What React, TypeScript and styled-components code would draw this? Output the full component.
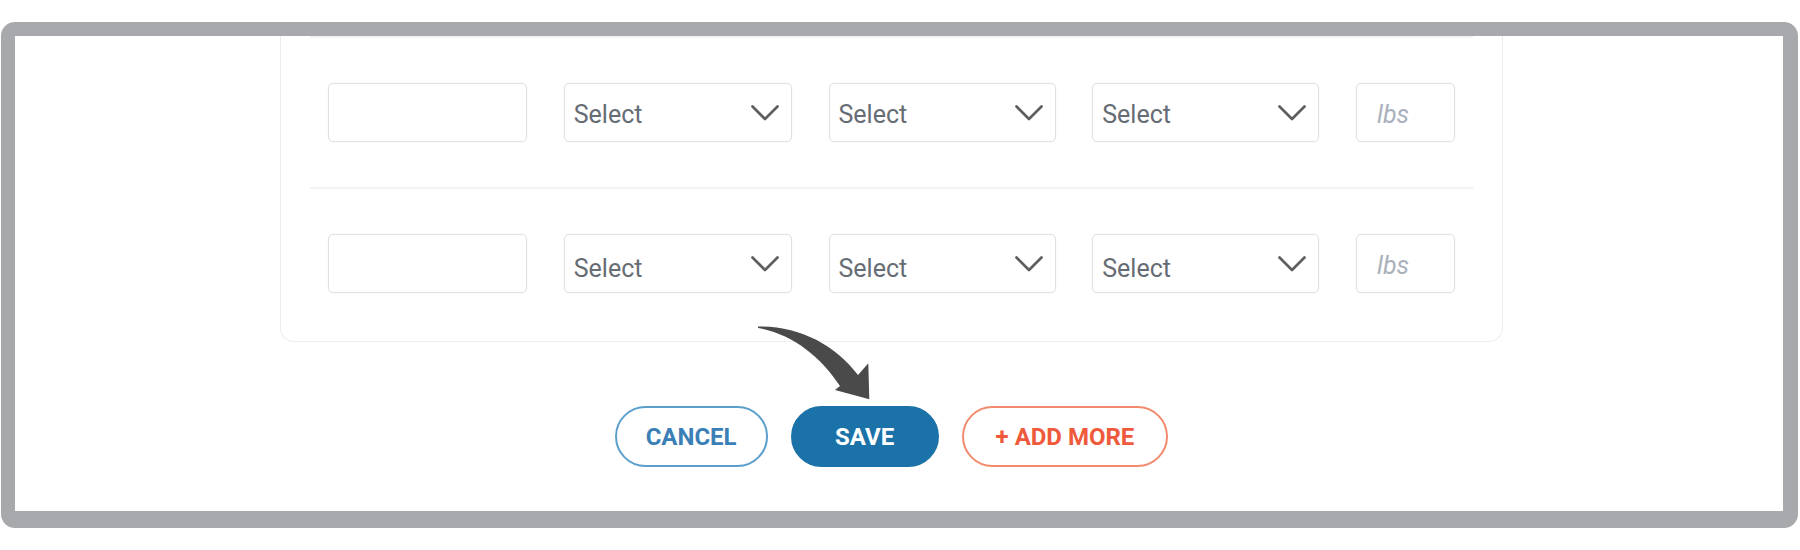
import * as React from "react";
import styled, { createGlobalStyle } from "styled-components";

const GlobalStyle = createGlobalStyle`
  html, body {
    margin: 0;
    padding: 0;
    background: #ffffff;
    font-family: Roboto, "Liberation Sans", Arial, sans-serif;
  }
`;

const Frame = styled.div`
  position: relative;
  box-sizing: border-box;
  margin: 22px 2px 0 1px;
  height: 506px;
  border-style: solid;
  border-color: #a7a9ac;
  border-width: 14px 15px 17px 14px;
  border-radius: 14px;
  background: #ffffff;
  overflow: hidden;
`;

const Content = styled.div`
  width: 1223px;
  margin-left: 265px;
  display: flex;
  flex-direction: column;
`;

const Card = styled.div`
  box-sizing: border-box;
  border: 1.5px solid #ededed;
  border-top: none;
  border-radius: 0 0 14px 14px;
  padding: 0 29px 3px;
`;

const Row = styled.div`
  display: flex;
  justify-content: space-between;
  align-items: center;
  padding: 45px 18px;
  border-top: 2px solid #f2f2f2;
`;

const Field = styled.div<{ $width: number }>`
  box-sizing: border-box;
  width: ${(p) => p.$width}px;
  height: 59px;
  border: 1.5px solid #e1e1e1;
  border-radius: 5px;
  background: #ffffff;
  box-shadow: 0 0 2px rgba(0, 0, 0, 0.06);
`;

const SelectBox = styled(Field)`
  display: flex;
  align-items: center;
  justify-content: space-between;
  padding: 0 12px 0 9px;
`;

const SelectLabel = styled.span<{ $clipped?: boolean }>`
  display: block;
  font-size: 25px;
  line-height: 29px;
  color: #666c74;
  padding-top: 3px;
  height: ${(p) => (p.$clipped ? "25px" : "29px")};
  margin-top: ${(p) => (p.$clipped ? "3px" : "0")};
  overflow: hidden;
`;

const UnitBox = styled(Field)`
  display: flex;
  align-items: center;
  padding: 3px 0 0 20px;
  font-size: 25px;
  font-style: italic;
  color: #a9b1bb;
`;

const Footer = styled.div`
  display: flex;
  justify-content: center;
  gap: 23px;
  margin-top: 64px;
`;

const Pill = styled.button<{ $tone: "outline" | "solid" | "accent" }>`
  box-sizing: border-box;
  min-width: 148px;
  height: 61px;
  padding: 0 ${(p) => (p.$tone === "accent" ? "32px" : "29px")};
  border-radius: 31px;
  font-family: Roboto, "Liberation Sans", Arial, sans-serif;
  font-size: 24px;
  font-weight: 700;
  cursor: pointer;
  border: 2px solid
    ${(p) =>
      p.$tone === "solid" ? "#1b72a8" : p.$tone === "accent" ? "#f28a6d" : "#5c9fcd"};
  background: ${(p) => (p.$tone === "solid" ? "#1b72a8" : "#ffffff")};
  color: ${(p) =>
    p.$tone === "solid" ? "#ffffff" : p.$tone === "accent" ? "#ee5a3b" : "#3a80b6"};
`;

const Pointer = styled.svg`
  position: absolute;
  left: 735px;
  top: 284px;
  width: 130px;
  height: 85px;
`;

const Chevron = () => (
  <svg width="28" height="16" viewBox="0 0 28 16">
    <path
      d="M1.5 1.5 L14 14 L26.5 1.5"
      fill="none"
      stroke="#5e5e5e"
      strokeWidth="2.7"
      strokeLinecap="round"
      strokeLinejoin="round"
    />
  </svg>
);

const rows = [{ id: 1 }, { id: 2, clipped: true }];

const App = () => {
  return (
    <>
      <GlobalStyle />
      <Frame>
        <Content>
          <Card>
            {rows.map((row) => (
              <Row key={row.id}>
                <Field $width={199} />
                {[228, 227, 227].map((w, i) => (
                  <SelectBox key={i} $width={w}>
                    <SelectLabel $clipped={row.clipped}>Select</SelectLabel>
                    <Chevron />
                  </SelectBox>
                ))}
                <UnitBox $width={99}>lbs</UnitBox>
              </Row>
            ))}
          </Card>
          <Footer>
            <Pill $tone="outline">CANCEL</Pill>
            <Pill $tone="solid">SAVE</Pill>
            <Pill $tone="accent">+ ADD MORE</Pill>
          </Footer>
        </Content>
        <Pointer viewBox="0 0 130 85">
          <path
            d="M8 6.5 C50 6 85 25 108 55 L118.3 43.3 L119.3 79.3 L85 70 L90 66 C70 36 42 14 8 8 Z"
            fill="#4a4a4a"
          />
        </Pointer>
      </Frame>
    </>
  );
};

export default App;
